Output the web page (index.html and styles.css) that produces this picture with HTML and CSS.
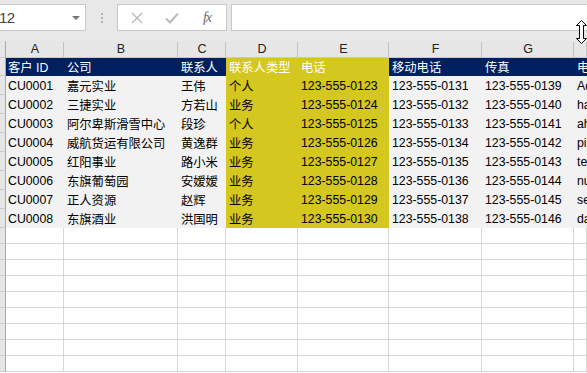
FILE: index.html
```html
<!DOCTYPE html>
<html>
<head>
<meta charset="utf-8">
<link rel="stylesheet" href="styles.css">
</head>
<body>
<div class="app">
  <div class="topbar">
    <div class="namebox"><span class="nb-text">12</span><span class="nb-arrow"></span></div>
    <div class="grip"><i></i><i></i><i></i></div>
    <div class="fxbox">
      <span class="fx-btn b1"><svg width="12" height="12" viewBox="0 0 12 12"><path d="M1 1 L11 11 M11 1 L1 11" stroke="#b9b9b9" stroke-width="1.4" fill="none"/></svg></span>
      <span class="fx-btn b2"><svg width="14" height="12" viewBox="0 0 14 12"><path d="M1 6.5 L5 10.5 L13 1.5" stroke="#b9b9b9" stroke-width="2" fill="none"/></svg></span>
      <span class="fx-btn b3 fx-label">fx</span>
    </div>
    <div class="formula"></div>
  </div>

  <div class="row colheads">
    <div class="rh"></div>
    <div class="ch">A</div><div class="ch">B</div><div class="ch">C</div><div class="ch">D</div>
    <div class="ch">E</div><div class="ch">F</div><div class="ch">G</div><div class="ch"></div>
  </div>

  <div class="row head">
    <div class="rh"></div>
    <div class="c nv">客户 ID</div><div class="c nv">公司</div><div class="c nv">联系人</div>
    <div class="c yl">联系人类型</div><div class="c yl">电话</div>
    <div class="c nv">移动电话</div><div class="c nv">传真</div><div class="c nv">电</div>
  </div>

  <div class="row data">
    <div class="rh"></div>
    <div class="c">CU0001</div><div class="c">嘉元实业</div><div class="c">王伟</div><div class="c yl">个人</div><div class="c yl">123-555-0123</div><div class="c">123-555-0131</div><div class="c">123-555-0139</div><div class="c">Ad</div>
  </div>
  <div class="row data">
    <div class="rh"></div>
    <div class="c">CU0002</div><div class="c">三捷实业</div><div class="c">方若山</div><div class="c yl">业务</div><div class="c yl">123-555-0124</div><div class="c">123-555-0132</div><div class="c">123-555-0140</div><div class="c">ha</div>
  </div>
  <div class="row data">
    <div class="rh"></div>
    <div class="c">CU0003</div><div class="c">阿尔卑斯滑雪中心</div><div class="c">段珍</div><div class="c yl">个人</div><div class="c yl">123-555-0125</div><div class="c">123-555-0133</div><div class="c">123-555-0141</div><div class="c">ah</div>
  </div>
  <div class="row data">
    <div class="rh"></div>
    <div class="c">CU0004</div><div class="c">威航货运有限公司</div><div class="c">黄逸群</div><div class="c yl">业务</div><div class="c yl">123-555-0126</div><div class="c">123-555-0134</div><div class="c">123-555-0142</div><div class="c">pil</div>
  </div>
  <div class="row data">
    <div class="rh"></div>
    <div class="c">CU0005</div><div class="c">红阳事业</div><div class="c">路小米</div><div class="c yl">业务</div><div class="c yl">123-555-0127</div><div class="c">123-555-0135</div><div class="c">123-555-0143</div><div class="c">ter</div>
  </div>
  <div class="row data">
    <div class="rh"></div>
    <div class="c">CU0006</div><div class="c">东旗葡萄园</div><div class="c">安嫒嫒</div><div class="c yl">业务</div><div class="c yl">123-555-0128</div><div class="c">123-555-0136</div><div class="c">123-555-0144</div><div class="c">nu</div>
  </div>
  <div class="row data">
    <div class="rh"></div>
    <div class="c">CU0007</div><div class="c">正人资源</div><div class="c">赵辉</div><div class="c yl">业务</div><div class="c yl">123-555-0129</div><div class="c">123-555-0137</div><div class="c">123-555-0145</div><div class="c">se</div>
  </div>
  <div class="row data">
    <div class="rh"></div>
    <div class="c">CU0008</div><div class="c">东旗酒业</div><div class="c">洪国明</div><div class="c yl">业务</div><div class="c yl">123-555-0130</div><div class="c">123-555-0138</div><div class="c">123-555-0146</div><div class="c">da</div>
  </div>

  <div class="row empty"><div class="rh"></div><div class="e"></div><div class="e"></div><div class="e"></div><div class="e"></div><div class="e"></div><div class="e"></div><div class="e"></div><div class="e"></div></div>
  <div class="row empty"><div class="rh"></div><div class="e"></div><div class="e"></div><div class="e"></div><div class="e"></div><div class="e"></div><div class="e"></div><div class="e"></div><div class="e"></div></div>
  <div class="row empty"><div class="rh"></div><div class="e"></div><div class="e"></div><div class="e"></div><div class="e"></div><div class="e"></div><div class="e"></div><div class="e"></div><div class="e"></div></div>
  <div class="row empty"><div class="rh"></div><div class="e"></div><div class="e"></div><div class="e"></div><div class="e"></div><div class="e"></div><div class="e"></div><div class="e"></div><div class="e"></div></div>
  <div class="row empty"><div class="rh"></div><div class="e"></div><div class="e"></div><div class="e"></div><div class="e"></div><div class="e"></div><div class="e"></div><div class="e"></div><div class="e"></div></div>
  <div class="row empty"><div class="rh"></div><div class="e"></div><div class="e"></div><div class="e"></div><div class="e"></div><div class="e"></div><div class="e"></div><div class="e"></div><div class="e"></div></div>
  <div class="row empty"><div class="rh"></div><div class="e"></div><div class="e"></div><div class="e"></div><div class="e"></div><div class="e"></div><div class="e"></div><div class="e"></div><div class="e"></div></div>
  <div class="row empty"><div class="rh"></div><div class="e"></div><div class="e"></div><div class="e"></div><div class="e"></div><div class="e"></div><div class="e"></div><div class="e"></div><div class="e"></div></div>
  <div class="row empty"><div class="rh"></div><div class="e"></div><div class="e"></div><div class="e"></div><div class="e"></div><div class="e"></div><div class="e"></div><div class="e"></div><div class="e"></div></div>

  <svg class="cursor" width="11" height="24" viewBox="0 0 11 24">
    <path d="M5.5 0.5 L10.5 5.5 L7.5 5.5 L7.5 18.5 L10.5 18.5 L5.5 23.5 L0.5 18.5 L3.5 18.5 L3.5 5.5 L0.5 5.5 Z" fill="#fff" stroke="#000" stroke-width="1"/>
  </svg>
</div>
</body>
</html>
```

FILE: styles.css
```css
html, body {
  margin: 0;
  padding: 0;
  background: #ffffff;
  overflow: hidden;
}
.app {
  position: relative;
  width: 587px;
  height: 373px;
  overflow: hidden;
  font-family: "Liberation Sans", "Noto Sans CJK SC", sans-serif;
  font-size: 12.3px;
  color: #000;
}
.topbar {
  height: 41px;
  box-sizing: border-box;
  padding-top: 4px;
  background: #e8e8e8;
  display: flex;
  align-items: flex-start;
}
.namebox {
  width: 87px;
  height: 27px;
  box-sizing: border-box;
  margin-left: -1px;
  background: #fff;
  border: 1px solid #c8c8c8;
  display: flex;
  align-items: center;
  justify-content: space-between;
  padding-right: 5px;
}
.nb-text {
  font-size: 15px;
  color: #444;
  margin-left: -1px;
  letter-spacing: -0.5px;
}
.nb-arrow {
  width: 0;
  height: 0;
  border-left: 4px solid transparent;
  border-right: 4px solid transparent;
  border-top: 4px solid #777;
}
.grip {
  width: 31px;
  height: 27px;
  display: flex;
  flex-direction: column;
  align-items: center;
  justify-content: center;
  gap: 2px;
}
.grip i {
  display: block;
  width: 2px;
  height: 2px;
  background: #b3b3b3;
}
.fxbox {
  width: 110px;
  height: 27px;
  box-sizing: border-box;
  background: #fff;
  border: 1px solid #c8c8c8;
  display: flex;
  align-items: center;
}
.fx-btn {
  display: flex;
  align-items: center;
  justify-content: center;
}
.b1 { width: 37px; }
.b2 { width: 33px; }
.b3 { width: 38px; }
.fx-label {
  font-family: "Liberation Serif", "DejaVu Serif", serif;
  font-style: italic;
  font-size: 14px;
  color: #666;
  letter-spacing: -1px;
}
.formula {
  margin-left: 4px;
  flex: 1;
  height: 27px;
  box-sizing: border-box;
  background: #fff;
  border: 1px solid #c8c8c8;
  border-right: none;
}
.row {
  display: grid;
  grid-template-columns: 6px 58px 114px 48px 72px 91px 93px 92px 1fr;
}
.row > div {
  box-sizing: border-box;
}
.rh {
  background: #e6e6e6;
  border-right: 1px solid #a9a9a9;
  border-bottom: 1px solid #c9c9c9;
}
.colheads {
  height: 17px;
  background: #e6e6e6;
}
.ch {
  background: #e6e6e6;
  border-bottom: 1px solid #c9c9c9;
  position: relative;
  text-align: center;
  line-height: 16px;
  font-size: 12.5px;
  color: #222;
}
.ch::after {
  content: "";
  position: absolute;
  right: 0;
  top: 1px;
  bottom: 0;
  width: 1px;
  background: #c2c2c2;
}
.head {
  height: 18px;
}
.data {
  height: 19px;
}
.c {
  background: #f2f2f2;
  padding-left: 3px;
  white-space: nowrap;
  overflow: hidden;
  display: flex;
  align-items: center;
}
.row > .c:nth-child(2) {
  padding-left: 2px;
}
.head .c {
  color: #fff;
}
.c.nv {
  background: #002060;
}
.c.yl {
  background: #d4c71f;
}
.empty {
  height: 16px;
}
.e {
  border-right: 1px solid #d6d6d6;
  border-bottom: 1px solid #d6d6d6;
}
.cursor {
  position: absolute;
  left: 576px;
  top: 20px;
}
```
